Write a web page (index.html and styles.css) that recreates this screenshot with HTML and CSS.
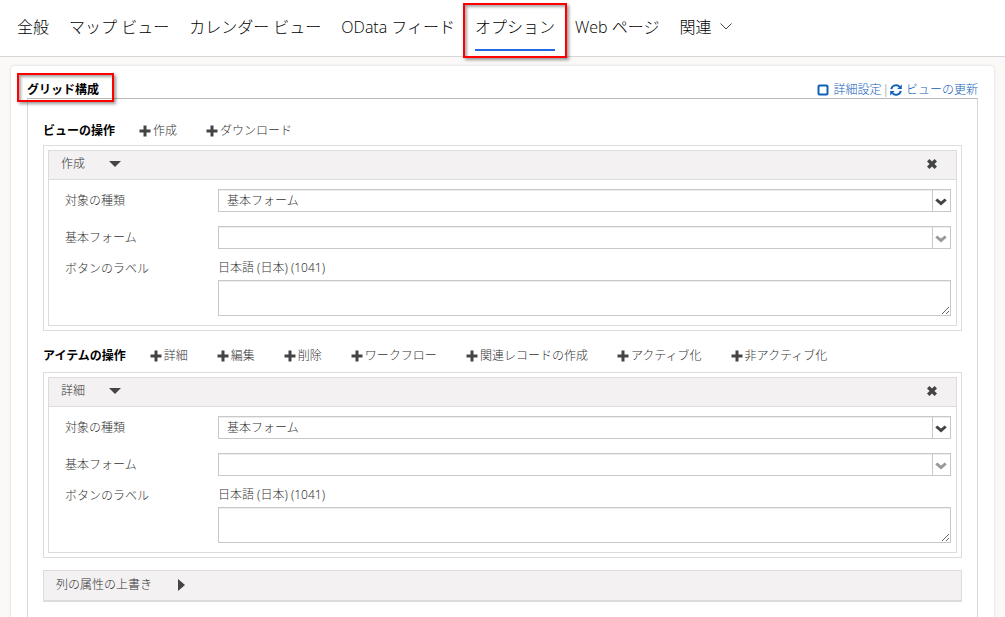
FILE: index.html
```html
<!DOCTYPE html>
<html lang="ja">
<head>
<meta charset="utf-8">
<meta name="viewport" content="width=device-width, initial-scale=1">
<title>グリッド構成</title>
<link rel="stylesheet" href="styles.css">
</head>
<body>
<svg class="sprite" aria-hidden="true">
  <symbol id="plus" viewBox="0 0 12 12"><path d="M4.5 0.5h3v4h4v3h-4v4h-3v-4h-4v-3h4z"/></symbol>
  <symbol id="cross" viewBox="0 0 12 12"><path d="M3.4 1L6 3.6 8.6 1 11 3.4 8.4 6 11 8.6 8.6 11 6 8.4 3.4 11 1 8.6 3.6 6 1 3.4z"/></symbol>
  <symbol id="chevron" viewBox="0 0 12 8"><path d="M2.3 0.4L6 3.6 9.7 0.4 11.7 2.4 6 7.6 0.3 2.4z"/></symbol>
  <symbol id="down" viewBox="0 0 12 6"><path d="M0 0h12L6 6z"/></symbol>
  <symbol id="right" viewBox="0 0 7 12"><path d="M0 0l7 6-7 6z"/></symbol>
</svg>

<nav class="tabs">
  <button class="tab">全般</button>
  <button class="tab">マップ ビュー</button>
  <button class="tab">カレンダー ビュー</button>
  <button class="tab">OData フィード</button>
  <button class="tab tab-active">オプション</button>
  <button class="tab">Web ページ</button>
  <button class="tab">関連 <svg class="tab-chevron" viewBox="0 0 12 7"><path d="M0.5 0.5L6 6 11.5 0.5"/></svg></button>
</nav>

<main class="card">
  <header class="card-head">
    <h1 class="title">グリッド構成</h1>
    <div class="links">
      <a class="link" href="#"><svg class="link-icon" viewBox="0 0 12 12"><rect x="1.5" y="1.5" width="9" height="9" rx="1"/></svg>詳細設定</a>
      <span class="divider">|</span>
      <a class="link" href="#"><svg class="link-icon" viewBox="0 0 12 12"><path d="M1.3 5.2A4.8 4.8 0 0 1 9.6 2.8M10.7 6.8A4.8 4.8 0 0 1 2.4 9.2"/><path class="solid" d="M11.8 0.4v4.6H7.2zM0.2 11.6V7h4.6z"/></svg>ビューの更新</a>
    </div>
  </header>

  <div class="panel">
    <div class="actions">
      <h2 class="subtitle">ビューの操作</h2>
      <button class="add"><svg class="plus"><use href="#plus"/></svg>作成</button>
      <button class="add"><svg class="plus"><use href="#plus"/></svg>ダウンロード</button>
    </div>
    <section class="frame">
      <div class="box">
        <div class="bar">
          <button class="toggle">作成<svg class="down"><use href="#down"/></svg></button>
          <button class="close" aria-label="削除"><svg class="cross"><use href="#cross"/></svg></button>
        </div>
        <div class="form">
          <label class="label" for="type1">対象の種類</label>
          <div class="combo"><select class="select" id="type1"><option>基本フォーム</option></select><svg class="arrow"><use href="#chevron"/></svg></div>
          <label class="label" for="form1">基本フォーム</label>
          <div class="combo combo-off"><select class="select" id="form1" disabled><option></option></select><svg class="arrow"><use href="#chevron"/></svg></div>
          <label class="label label-top" for="text1">ボタンのラベル</label>
          <div class="text"><span class="language">日本語 (日本) (1041)</span><textarea class="area" id="text1"></textarea></div>
        </div>
      </div>
    </section>

    <div class="actions">
      <h2 class="subtitle">アイテムの操作</h2>
      <button class="add"><svg class="plus"><use href="#plus"/></svg>詳細</button>
      <button class="add"><svg class="plus"><use href="#plus"/></svg>編集</button>
      <button class="add"><svg class="plus"><use href="#plus"/></svg>削除</button>
      <button class="add"><svg class="plus"><use href="#plus"/></svg>ワークフロー</button>
      <button class="add"><svg class="plus"><use href="#plus"/></svg>関連レコードの作成</button>
      <button class="add"><svg class="plus"><use href="#plus"/></svg>アクティブ化</button>
      <button class="add"><svg class="plus"><use href="#plus"/></svg>非アクティブ化</button>
    </div>
    <section class="frame">
      <div class="box">
        <div class="bar">
          <button class="toggle">詳細<svg class="down"><use href="#down"/></svg></button>
          <button class="close" aria-label="削除"><svg class="cross"><use href="#cross"/></svg></button>
        </div>
        <div class="form">
          <label class="label" for="type2">対象の種類</label>
          <div class="combo"><select class="select" id="type2"><option>基本フォーム</option></select><svg class="arrow"><use href="#chevron"/></svg></div>
          <label class="label" for="form2">基本フォーム</label>
          <div class="combo combo-off"><select class="select" id="form2" disabled><option></option></select><svg class="arrow"><use href="#chevron"/></svg></div>
          <label class="label label-top" for="text2">ボタンのラベル</label>
          <div class="text"><span class="language">日本語 (日本) (1041)</span><textarea class="area" id="text2"></textarea></div>
        </div>
      </div>
    </section>

    <button class="columns">列の属性の上書き<svg class="right"><use href="#right"/></svg></button>
  </div>
</main>
</body>
</html>
```
FILE: styles.css
```css
* { box-sizing: border-box; }

body {
  margin: 0;
  min-height: 100vh;
  display: flex;
  flex-direction: column;
  background: #faf9f8;
  color: #333;
  font: 300 12px/16px "Noto Sans", "Noto Sans CJK JP", sans-serif;
}

button, select, textarea {
  margin: 0;
  padding: 0;
  border: 0;
  background: none;
  color: inherit;
  font: inherit;
}

svg { display: block; fill: #444; flex: none; }
.sprite { position: absolute; width: 0; height: 0; }

/* Tabs */
.tabs {
  display: flex;
  gap: 20px;
  height: 57px;
  padding: 2px 17px 5px;
  background: #fff;
  border-bottom: 1px solid #d6d6d6;
}
.tab {
  position: relative;
  display: flex;
  align-items: center;
  gap: 8px;
  color: #000;
  font-family: "Open Sans", "Noto Sans CJK JP", sans-serif;
  font-size: 16px;
  line-height: 24px;
  white-space: nowrap;
}
.tab-active { box-shadow: inset 0 -2px #2266e3; }
.tab-chevron { width: 12px; height: 7px; fill: none; stroke: #444; }

/* Red callout frames */
.tab-active::before, .title::before {
  content: "";
  position: absolute;
  border: 2px solid #ff0000;
  box-shadow: 2px 2px 3px rgba(0, 0, 0, .4), inset 2px 2px 3px rgba(0, 0, 0, .35);
  pointer-events: none;
}
.tab-active::before { inset: 1px -12px -7px; }
.title::before { inset: -9px -15px -4px -10px; }

/* Card */
.card {
  flex: 1;
  display: flex;
  flex-direction: column;
  margin: 9px 11px 0;
  padding: 0 16px;
  background: #fff;
  border-radius: 4px 4px 0 0;
  box-shadow: 0 0 3px rgba(0, 0, 0, .15);
}
.card-head {
  display: flex;
  justify-content: space-between;
  align-items: flex-end;
  height: 32px;
}
.title {
  position: relative;
  margin: 0;
  color: #000;
  font-size: 12px;
  font-weight: 700;
}
.links { display: flex; gap: 1px; color: #888; }
.link {
  display: flex;
  align-items: center;
  gap: 4px;
  color: #1160b7;
  text-decoration: none;
}
.link-icon { width: 12px; height: 12px; fill: none; stroke: #1160b7; stroke-width: 2; }
.solid { fill: #1160b7; stroke: none; }

.panel {
  flex: 1;
  padding: 8px 15px 15px;
  border: 1px solid #d6d6d6;
  border-top-color: #b8b8b8;
  border-bottom: 0;
}

/* Action rows */
.actions { display: flex; align-items: center; gap: 29px; height: 38px; padding-top: 9px; }
.frame + .actions { height: 41px; }
.subtitle {
  margin: 0 -5px 0 0;
  color: #000;
  font-size: 12px;
  font-weight: 700;
}
.add { display: flex; align-items: center; gap: 2px; white-space: nowrap; }
.plus { width: 12px; height: 12px; }

/* Option groups */
.frame { padding: 4px; border: 1px solid #dcdcdc; }
.box { border: 1px solid #dcdcdc; }
.bar {
  display: flex;
  justify-content: space-between;
  align-items: center;
  height: 29px;
  padding: 0 18px 2px 12px;
  background: #f3f1f2;
  border-bottom: 1px solid #dcdcdc;
}
.toggle { display: flex; align-items: center; gap: 24px; }
.down { width: 12px; height: 6px; }
.cross { width: 12px; height: 12px; }

.form {
  display: grid;
  grid-template-columns: 137px 1fr;
  gap: 14px 16px;
  padding: 9px 5px 9px 16px;
}
.label { align-self: center; }
.label-top { align-self: start; margin-top: -2px; }
.combo {
  position: relative;
  display: flex;
  height: 23px;
  border: 1px solid #c8c8c8;
  box-shadow: inset 0 1px #eee;
}
.select { flex: 1; appearance: none; padding: 0 28px 0 8px; opacity: 1; }
.combo::after {
  content: "";
  position: absolute;
  inset: 0 17px 0 auto;
  border-left: 1px solid #c8c8c8;
}
.arrow { position: absolute; right: 3px; top: 8px; width: 12px; height: 8px; pointer-events: none; }
.combo-off .arrow { fill: #999; }
.text { display: flex; flex-direction: column; gap: 4px; margin-top: -3px; }
.area {
  width: 100%;
  height: 36px;
  border: 1px solid #c8c8c8;
  box-shadow: inset 0 1px #eee;
  resize: both;
}

.columns {
  display: flex;
  align-items: center;
  gap: 26px;
  width: 100%;
  height: 32px;
  margin-top: 12px;
  padding: 0 12px 2px;
  background: #f3f1f2;
  border: 1px solid #dcdcdc;
  border-bottom-width: 2px;
}
.right { width: 7px; height: 12px; }
```
